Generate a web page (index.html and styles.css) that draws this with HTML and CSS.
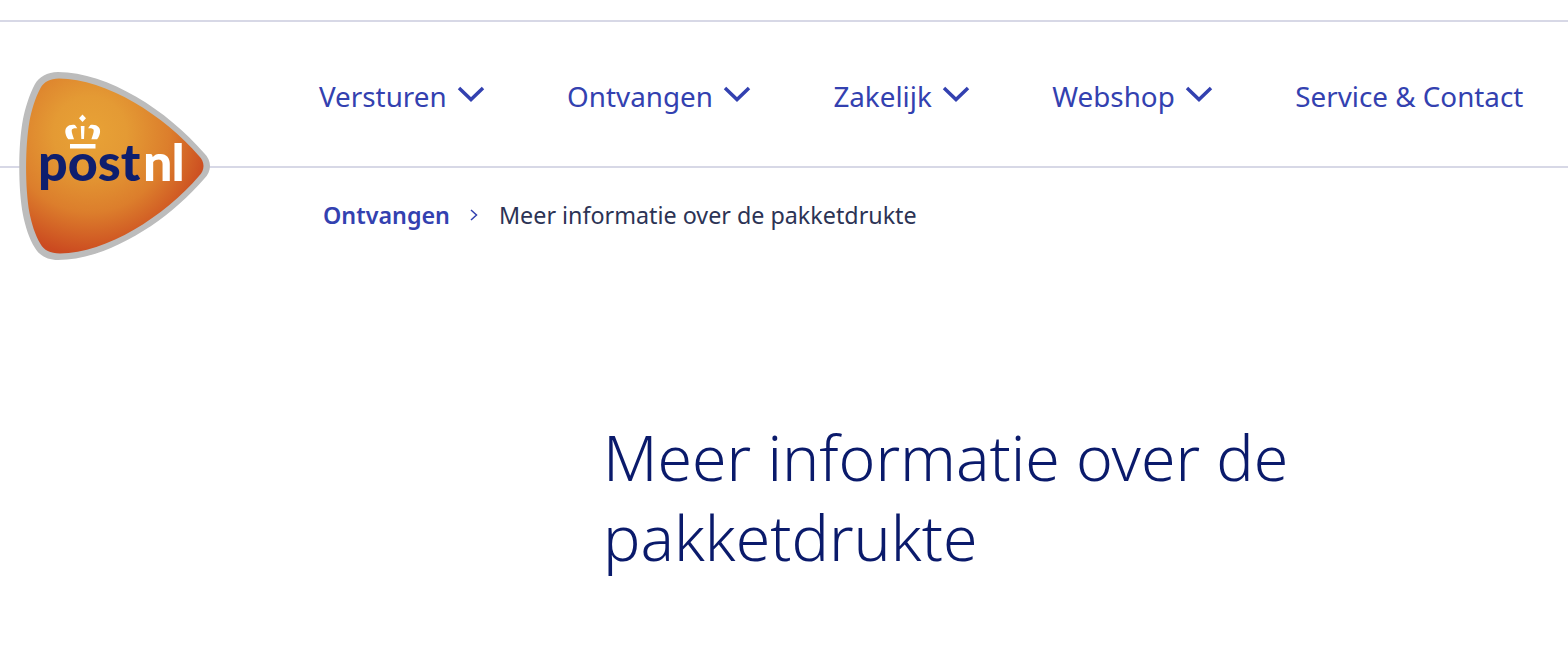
FILE: index.html
```html
<!DOCTYPE html>
<html lang="nl">
<head>
    <meta charset="UTF-8">
    <meta name="viewport" content="width=device-width, initial-scale=1.0">
    <title>Meer informatie over de pakketdrukte</title>
    <link rel="stylesheet" href="styles.css">
</head>
<body>
    <header class="site-header">
        <a class="logo" href="#">
            <svg viewBox="0 0 192 192" width="192" height="192">
                <defs>
                    <radialGradient id="logo-fill" gradientUnits="userSpaceOnUse" cx="72" cy="62" r="122">
                        <stop offset="0" stop-color="#e8a236"/>
                        <stop offset="0.3" stop-color="#e49a34"/>
                        <stop offset="0.65" stop-color="#dc7e2c"/>
                        <stop offset="1" stop-color="#cb4a20"/>
                    </radialGradient>
                </defs>
                <path d="M40 1 C29 1 21 6 17 13 C11 24 7 38 5 48 C0 75 0 117 5 144 C7 154 11 168 17 177 C21 184 29 189 40 189 C90 189 150 150 186 108 C194 100 194 90 186 82 C150 40 90 1 40 1 Z" fill="#bcbcbc"/>
                <path d="M41 7.500 C32 7.500 26 11 22.500 17 C17 27 13.500 40 11.500 50 C7 76 7 116 11.500 142 C13.500 152 17 164 22.500 173 C26 179 32 182.500 42 182.500 C88 182.500 147 145 181 105 C187 99 187 91 181 85 C147 45 88 7.500 41 7.500 Z" fill="url(#logo-fill)"/>
                <g fill="#fff">
                    <rect x="52" y="73" width="25.500" height="4.500"/>
                    <path d="M64.500 43.500 L68 47.300 L64.500 51 L61 47.300 Z"/>
                    <path d="M50.300 68.300 C47 64 46.500 59 48.500 56.500 C50.500 54 54 53.500 57 54 L59.300 57.300 C56.500 57 54 57.500 53.700 59 C53.400 61.500 55 65 56 68.300 Z"/>
                    <path d="M79.100 68.300 C82.400 64 82.900 59 80.900 56.500 C78.900 54 75.400 53.500 72.400 54 L70.100 57.300 C72.900 57 75.400 57.500 75.700 59 C76 61.500 74.400 65 73.400 68.300 Z"/>
                    <path d="M62.800 55 H66.500 L66 68 H63.300 Z"/>
                </g>
                <text class="logo-post" x="20" y="110">post</text>
                <text class="logo-nl" x="125" y="110">nl</text>
            </svg>
        </a>
        <nav class="main-nav">
            <a href="#" class="nav-item">Versturen
                <svg class="chevron" viewBox="0 0 28 16" width="28" height="16"><path d="M2 2 L14 13.500 L26 2"/></svg>
            </a>
            <a href="#" class="nav-item">Ontvangen
                <svg class="chevron" viewBox="0 0 28 16" width="28" height="16"><path d="M2 2 L14 13.500 L26 2"/></svg>
            </a>
            <a href="#" class="nav-item">Zakelijk
                <svg class="chevron" viewBox="0 0 28 16" width="28" height="16"><path d="M2 2 L14 13.500 L26 2"/></svg>
            </a>
            <a href="#" class="nav-item">Webshop
                <svg class="chevron" viewBox="0 0 28 16" width="28" height="16"><path d="M2 2 L14 13.500 L26 2"/></svg>
            </a>
            <a href="#" class="nav-item">Service &amp; Contact</a>
        </nav>
    </header>

    <div class="breadcrumb">
        <a href="#">Ontvangen</a>
        <svg class="crumb-arrow" viewBox="0 0 10 14" width="10" height="14"><path d="M2 2 L7.500 7 L2 12"/></svg>
        <span>Meer informatie over de pakketdrukte</span>
    </div>

    <main class="content">
        <h1>Meer informatie over de pakketdrukte</h1>
    </main>
</body>
</html>
```

FILE: styles.css
```css
body {
    margin: 0;
    padding-top: 20px;
    background-color: #fff;
    font-family: "Noto Sans", sans-serif;
    overflow: hidden;
}
a {
    text-decoration: none;
}
.site-header {
    position: relative;
    height: 144px;
    border-top: 2px solid #d7d8e6;
    border-bottom: 2px solid #d7d8e6;
}
.logo {
    position: absolute;
    left: 18px;
    top: 49px;
    width: 192px;
    height: 192px;
}
.logo-post,
.logo-nl {
    font-family: Lato, sans-serif;
    font-size: 52px;
    font-weight: 900;
}
.logo-post {
    fill: #0e1e6e;
}
.logo-nl {
    fill: #fff;
    letter-spacing: -1px;
}
.main-nav {
    display: flex;
    gap: 82.500px;
    padding: 51px 0 0 319px;
}
.nav-item {
    display: flex;
    align-items: center;
    gap: 10px;
    color: #3341b0;
    font-size: 27.800px;
    line-height: 46px;
}
.chevron {
    fill: none;
    stroke: #3341b0;
    stroke-width: 3.500;
    margin-bottom: 4px;
}
.breadcrumb {
    display: flex;
    align-items: center;
    height: 34px;
    margin-top: 30px;
    padding-left: 323px;
    font-size: 23.300px;
    color: #2c3355;
}
.breadcrumb a {
    color: #3341b0;
    font-weight: 600;
}
.crumb-arrow {
    margin: 0 20px 0 19px;
    fill: none;
    stroke: #3341b0;
    stroke-width: 1.500;
}
.content {
    padding: 185px 0 0 603px;
}
.content h1 {
    width: 760px;
    margin: 0;
    color: #0a1a6b;
    font-size: 62.500px;
    font-weight: 300;
    line-height: 80px;
}
```
